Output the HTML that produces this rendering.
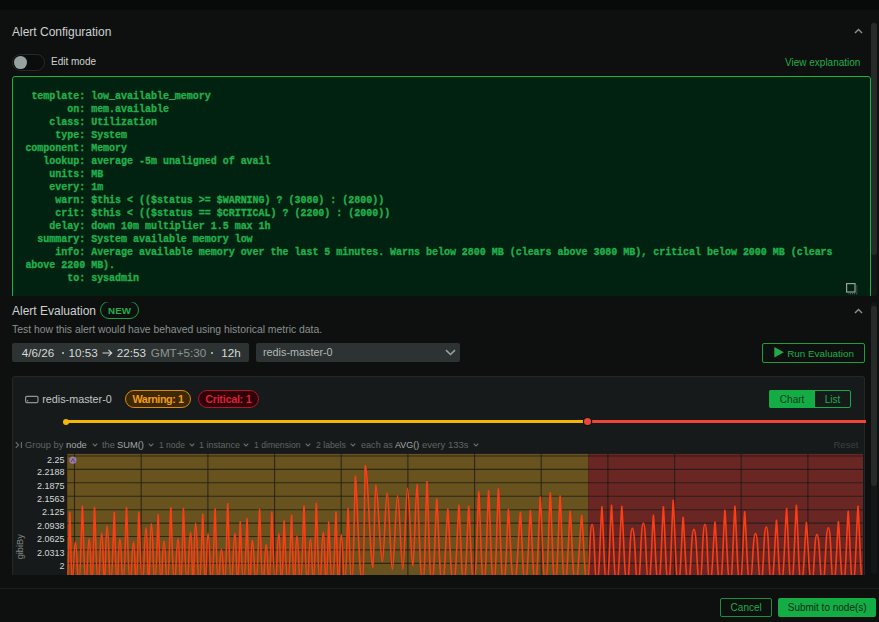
<!DOCTYPE html>
<html><head><meta charset="utf-8">
<style>
*{box-sizing:border-box;margin:0;padding:0}
html,body{width:879px;height:622px;overflow:hidden;background:#0e1010;font-family:"Liberation Sans",sans-serif;color:#d6d9d8}
.abs{position:absolute}
#top{left:0;top:0;width:879px;height:10px;background:#080a0a}
.h{font-size:12px;color:#cdd1d0;white-space:nowrap}
.chev{width:8px;height:5px}
#code{left:12px;top:75.5px;width:859px;height:240px;background:#012211;border:1px solid #1eb246;border-radius:3px}
pre{position:absolute;left:12.4px;top:13px;font-family:"Liberation Mono",monospace;font-weight:bold;font-size:10px;line-height:13px;color:#21b04b;white-space:pre-wrap;width:830px;letter-spacing:-0.022px;-webkit-text-stroke:0.3px #21b04b}
#clip1{left:0;top:0;width:879px;height:296px;overflow:hidden}
#band{display:none}
.dt{top:44px;font-size:11.7px;line-height:13px;color:#d6dad9;white-space:pre}
.sb{background:#262b2a;border-radius:3px;width:6px}
</style></head><body>
<div class="abs" id="top"></div>
<div class="abs" id="clip1">
  <div class="abs h" style="left:12px;top:26px;line-height:12px">Alert Configuration</div>
  <svg class="abs" style="left:854px;top:28px" width="9" height="6" viewBox="0 0 9 6"><path d="M1 5 L4.5 1.5 L8 5" fill="none" stroke="#8d9391" stroke-width="1.4"/></svg>
  <div class="abs" style="left:12px;top:54px;width:33px;height:16.5px;border-radius:8.25px;background:#0b0d0d;border:1px solid #242a2a"></div>
  <div class="abs" style="left:14.2px;top:55.8px;width:12.8px;height:12.8px;border-radius:50%;background:#96a2a0"></div>
  <div class="abs" style="left:51px;top:56px;font-size:10px;line-height:12px;color:#cfd3d2">Edit mode</div>
  <div class="abs" style="left:785px;top:57px;font-size:10px;line-height:12px;color:#1eae48">View explanation</div>
<div class="abs" id="code" style="top:75.5px">
<pre> template: low_available_memory
       on: mem.available
    class: Utilization
     type: System
component: Memory
   lookup: average -5m unaligned of avail
    units: MB
    every: 1m
     warn: $this &lt; (($status &gt;= $WARNING) ? (3080) : (2800))
     crit: $this &lt; (($status == $CRITICAL) ? (2200) : (2000))
    delay: down 10m multiplier 1.5 max 1h
  summary: System available memory low
     info: Average available memory over the last 5 minutes. Warns below 2800 MB (clears above 3080 MB), critical below 2000 MB (clears above 2200 MB).
       to: sysadmin</pre>
</div>
  <div class="sb abs" style="left:870.6px;top:22px;height:274px;background:#141717"></div>
  <div class="sb abs" style="left:870.6px;top:23.3px;height:232px"></div>
  <svg class="abs" style="left:845px;top:282px" width="14" height="13" viewBox="0 0 14 13"><rect x="1.6" y="1.6" width="8.4" height="8.4" fill="none" stroke="#9aa09e" stroke-width="1.2"/><path d="M11.8 3.5 V11.8 H3.5" fill="none" stroke="#6f7573" stroke-width="1" stroke-dasharray="1 1"/></svg>
</div>
<div class="abs" id="band"></div>

<div class="abs" id="clip2" style="left:0;top:302px;width:879px;height:273px;overflow:hidden">
  <div class="abs h" style="left:12px;top:3.3px;line-height:12px">Alert Evaluation</div>
  <div class="abs" style="left:100px;top:-1px;width:39px;height:18.4px;border:1px solid #1c9e3e;border-radius:9px;color:#1eae48;font-weight:bold;font-size:9.8px;line-height:17.5px;text-align:center">NEW</div>
  <svg class="abs" style="left:854px;top:6px" width="9" height="6" viewBox="0 0 9 6"><path d="M1 5 L4.5 1.5 L8 5" fill="none" stroke="#8d9391" stroke-width="1.4"/></svg>
  <div class="abs" style="left:12px;top:21.5px;font-size:10.4px;line-height:12px;color:#8a908e;white-space:nowrap">Test how this alert would have behaved using historical metric data.</div>
  <div class="abs" style="left:12px;top:41.2px;width:237px;height:19.2px;background:#2d3332;border-radius:2px"></div>
  <div class="abs dt" style="left:21.8px">4/6/26</div>
  <div class="abs" style="left:61.5px;top:50px;width:2.2px;height:2.2px;border-radius:50%;background:#c9cdcc"></div>
  <div class="abs dt" style="left:68.5px">10:53</div>
  <svg class="abs" style="left:102px;top:47px" width="11" height="8" viewBox="0 0 11 8"><path d="M0.5 4 H9.6 M6.4 0.9 L9.7 4 L6.4 7.1" fill="none" stroke="#d0d4d3" stroke-width="1.1"/></svg>
  <div class="abs dt" style="left:116.7px">22:53</div>
  <div class="abs dt" style="left:150.8px;color:#8d9391">GMT+5:30</div>
  <div class="abs" style="left:210.9px;top:50px;width:2.2px;height:2.2px;border-radius:50%;background:#c9cdcc"></div>
  <div class="abs dt" style="left:221.2px">12h</div>
  <div class="abs" style="left:256px;top:41px;width:204px;height:19px;background:#2d3332;border-radius:2px"></div>
  <div class="abs" style="left:263px;top:44.2px;font-size:10.8px;line-height:13px;color:#b3b8b6;white-space:pre">redis-master-0</div>
  <svg class="abs" style="left:445px;top:47px" width="11" height="7" viewBox="0 0 11 7"><path d="M1 1.2 L5.5 5.5 L10 1.2" fill="none" stroke="#9aa09e" stroke-width="1.6"/></svg>
  <div class="abs" style="left:762px;top:41px;width:103px;height:19.5px;border:1px solid #1c9e3e;border-radius:2px"></div>
  <svg class="abs" style="left:773.5px;top:45.1px" width="10" height="11" viewBox="0 0 10 11"><path d="M0.3 0 L9.8 5.25 L0.3 10.5 Z" fill="#1eae48"/></svg>
  <div class="abs" style="left:787.2px;top:45.6px;font-size:9.85px;line-height:12px;color:#1eae48;white-space:pre">Run Evaluation</div>
  <div class="sb abs" style="left:870.5px;top:0;height:272px;background:#141717"></div>
  <div class="sb abs" style="left:870.5px;top:3.5px;height:180px"></div>
  <div class="abs" id="card" style="left:12px;top:74px;width:853px;height:260px;background:#171a1a;border:1px solid #232827;border-radius:3px"></div>
  <div class="abs" style="left:0;top:-302px;width:879px;height:622px">

<div class="abs" style="left:12px;top:376px;width:853px;height:260px;background:#171a1a;border:1px solid #232827;border-radius:3px"></div>
<svg class="abs" style="left:24px;top:395px" width="16" height="9" viewBox="0 0 16 9"><rect x="1.6" y="1.4" width="12.4" height="6.2" rx="1.3" fill="none" stroke="#8e9594" stroke-width="1.2"/><rect x="3" y="5.2" width="1.2" height="1.2" fill="#8e9594"/></svg>
<div class="abs" style="left:42.2px;top:393.2px;font-size:10.8px;line-height:13px;color:#c2c6c5;white-space:pre">redis-master-0</div>
<div class="abs" style="left:125px;top:390px;width:66px;height:18px;border:1px solid #d68a10;background:#3d2800;border-radius:9px;color:#f09a18;font-weight:bold;font-size:10.8px;letter-spacing:-0.44px;line-height:16.5px;text-align:center;white-space:pre">Warning: 1</div>
<div class="abs" style="left:197.6px;top:390px;width:61.4px;height:18px;border:1px solid #b0162a;background:#2e0208;border-radius:9px;color:#dc2035;font-weight:bold;font-size:10.8px;letter-spacing:-0.27px;line-height:16.5px;text-align:center;white-space:pre">Critical: 1</div>
<div class="abs" style="left:769px;top:390px;width:82px;height:18.4px;border:1px solid #13ac45;border-radius:2px"></div>
<div class="abs" style="left:769px;top:390px;width:46.2px;height:18.4px;background:#13ac45;border-radius:2px 0 0 2px"></div><div class="abs" style="left:769px;top:390.8px;width:46.2px;color:#0f3a1d;font-size:10px;line-height:18.4px;text-align:center">Chart</div>
<div class="abs" style="left:814.7px;top:390.8px;width:35.8px;height:18.4px;color:#1eae48;font-size:10px;line-height:18.4px;text-align:center">List</div>
<div class="abs" style="left:66px;top:420.1px;width:518px;height:3px;background:#f5b800"></div>
<div class="abs" style="left:591.5px;top:420.1px;width:274.2px;height:3px;background:#f04438"></div>
<div class="abs" style="left:63.3px;top:418.8px;width:6px;height:6px;border-radius:50%;background:#f5b800"></div>
<div class="abs" style="left:583.9px;top:417.9px;width:7.4px;height:7.4px;border-radius:50%;background:#f04438;box-shadow:0 0 0 1.2px #111414"></div>
<svg class="abs" style="left:15px;top:441px" width="8" height="8" viewBox="0 0 8 8"><path d="M0.8 1.2 L3.6 4 L0.8 6.8" fill="none" stroke="#6a706e" stroke-width="1.1"/><line x1="6.4" y1="1" x2="6.4" y2="7" stroke="#6a706e" stroke-width="1.1"/></svg>
<div class="abs" style="left:24.7px;top:438.8px;font-size:9.3px;line-height:12px;color:#5f6664;white-space:pre;transform:scaleX(1.007);transform-origin:0 0">Group by</div>
<div class="abs" style="left:65.7px;top:438.8px;font-size:9.3px;line-height:12px;color:#a2a8a6;white-space:pre;transform:scaleX(1.005);transform-origin:0 0">node</div>
<div class="abs" style="left:102px;top:438.8px;font-size:9.3px;line-height:12px;color:#5f6664;white-space:pre;transform:scaleX(1.005);transform-origin:0 0">the</div>
<div class="abs" style="left:117px;top:438.8px;font-size:9.3px;line-height:12px;color:#a2a8a6;white-space:pre;transform:scaleX(1.005);transform-origin:0 0">SUM()</div>
<div class="abs" style="left:159px;top:438.8px;font-size:9.3px;line-height:12px;color:#5f6664;white-space:pre;transform:scaleX(0.914);transform-origin:0 0">1 node</div>
<div class="abs" style="left:199px;top:438.8px;font-size:9.3px;line-height:12px;color:#5f6664;white-space:pre;transform:scaleX(0.967);transform-origin:0 0">1 instance</div>
<div class="abs" style="left:253.5px;top:438.8px;font-size:9.3px;line-height:12px;color:#5f6664;white-space:pre;transform:scaleX(0.927);transform-origin:0 0">1 dimension</div>
<div class="abs" style="left:315.5px;top:438.8px;font-size:9.3px;line-height:12px;color:#5f6664;white-space:pre;transform:scaleX(0.930);transform-origin:0 0">2 labels</div>
<div class="abs" style="left:361px;top:438.8px;font-size:9.3px;line-height:12px;color:#5f6664;white-space:pre;transform:scaleX(0.977);transform-origin:0 0">each as</div>
<div class="abs" style="left:395.1px;top:438.8px;font-size:9.3px;line-height:12px;color:#a2a8a6;white-space:pre;transform:scaleX(0.959);transform-origin:0 0">AVG()</div>
<div class="abs" style="left:422px;top:438.8px;font-size:9.3px;line-height:12px;color:#5f6664;white-space:pre;transform:scaleX(1.025);transform-origin:0 0">every 133s</div>
<svg class="abs" style="left:91.6px;top:442.5px" width="6" height="4" viewBox="0 0 6 4"><path d="M0.7 0.7 L3 3 L5.3 0.7" fill="none" stroke="#6a706e" stroke-width="1.1"/></svg>
<svg class="abs" style="left:148px;top:442.5px" width="6" height="4" viewBox="0 0 6 4"><path d="M0.7 0.7 L3 3 L5.3 0.7" fill="none" stroke="#6a706e" stroke-width="1.1"/></svg>
<svg class="abs" style="left:189px;top:442.5px" width="6" height="4" viewBox="0 0 6 4"><path d="M0.7 0.7 L3 3 L5.3 0.7" fill="none" stroke="#6a706e" stroke-width="1.1"/></svg>
<svg class="abs" style="left:243px;top:442.5px" width="6" height="4" viewBox="0 0 6 4"><path d="M0.7 0.7 L3 3 L5.3 0.7" fill="none" stroke="#6a706e" stroke-width="1.1"/></svg>
<svg class="abs" style="left:305px;top:442.5px" width="6" height="4" viewBox="0 0 6 4"><path d="M0.7 0.7 L3 3 L5.3 0.7" fill="none" stroke="#6a706e" stroke-width="1.1"/></svg>
<svg class="abs" style="left:350.3px;top:442.5px" width="6" height="4" viewBox="0 0 6 4"><path d="M0.7 0.7 L3 3 L5.3 0.7" fill="none" stroke="#6a706e" stroke-width="1.1"/></svg>
<svg class="abs" style="left:473.2px;top:442.5px" width="6" height="4" viewBox="0 0 6 4"><path d="M0.7 0.7 L3 3 L5.3 0.7" fill="none" stroke="#6a706e" stroke-width="1.1"/></svg>
<div class="abs" style="left:833.5px;top:439px;font-size:9.5px;line-height:12px;color:#3b403f">Reset</div>
<svg class="abs" style="left:0;top:0" width="879" height="622" viewBox="0 0 879 622">
<rect x="67.2" y="453.9" width="521.0" height="130" fill="#68521e"/>
<rect x="588.2" y="453.9" width="274.79999999999995" height="130" fill="#692623"/>
<g stroke="rgba(22,25,25,0.72)" stroke-width="1.1"><line x1="67.2" y1="456.0" x2="863" y2="456.0"/><line x1="67.2" y1="469.4" x2="863" y2="469.4"/><line x1="67.2" y1="482.8" x2="863" y2="482.8"/><line x1="67.2" y1="496.3" x2="863" y2="496.3"/><line x1="67.2" y1="509.7" x2="863" y2="509.7"/><line x1="67.2" y1="523.1" x2="863" y2="523.1"/><line x1="67.2" y1="536.5" x2="863" y2="536.5"/><line x1="67.2" y1="549.9" x2="863" y2="549.9"/><line x1="67.2" y1="563.4" x2="863" y2="563.4"/><line x1="67.2" y1="576.8" x2="863" y2="576.8"/><line x1="74.5" y1="453.9" x2="74.5" y2="590"/><line x1="141.2" y1="453.9" x2="141.2" y2="590"/><line x1="207.9" y1="453.9" x2="207.9" y2="590"/><line x1="274.6" y1="453.9" x2="274.6" y2="590"/><line x1="341.2" y1="453.9" x2="341.2" y2="590"/><line x1="407.9" y1="453.9" x2="407.9" y2="590"/><line x1="474.6" y1="453.9" x2="474.6" y2="590"/><line x1="541.2" y1="453.9" x2="541.2" y2="590"/><line x1="607.9" y1="453.9" x2="607.9" y2="590"/><line x1="674.6" y1="453.9" x2="674.6" y2="590"/><line x1="741.2" y1="453.9" x2="741.2" y2="590"/><line x1="807.9" y1="453.9" x2="807.9" y2="590"/></g>
<path d="M67.0 584.0 C68.40 584.0 68.96 526.6 69.8 512.3 C70.62 526.6 71.17 584.0 72.5 584.0 C73.92 584.0 73.79 542.0 75.3 542.0 C77.25 542.0 77.07 584.0 78.8 584.0 C80.62 584.0 81.34 521.9 82.4 506.4 C83.44 521.9 84.12 584.0 85.8 584.0 C87.57 584.0 87.40 538.8 89.3 538.8 C90.73 538.8 90.60 584.0 91.9 584.0 C93.20 584.0 93.72 522.8 94.5 507.5 C95.59 522.8 96.33 584.0 98.2 584.0 C99.97 584.0 99.79 533.0 101.8 533.0 C103.23 533.0 103.10 584.0 104.4 584.0 C105.70 584.0 105.57 525.7 107.0 525.7 C109.01 525.7 108.83 584.0 110.7 584.0 C112.47 584.0 113.20 526.6 114.3 512.3 C115.12 526.6 115.67 584.0 117.0 584.0 C118.42 584.0 118.29 538.8 119.8 538.8 C121.64 538.8 121.47 584.0 123.2 584.0 C124.83 584.0 125.50 522.8 126.5 507.5 C127.56 522.8 128.28 584.0 130.1 584.0 C131.82 584.0 131.65 542.0 133.6 542.0 C135.03 542.0 134.90 584.0 136.2 584.0 C137.50 584.0 138.02 526.6 138.8 512.3 C139.90 526.6 140.62 584.0 142.4 584.0 C144.27 584.0 144.09 527.7 146.1 527.7 C147.53 527.7 147.40 584.0 148.7 584.0 C150.00 584.0 149.87 523.6 151.3 523.6 C153.20 523.6 153.03 584.0 154.8 584.0 C156.47 584.0 157.16 528.6 158.2 514.8 C159.06 528.6 159.62 584.0 161.1 584.0 C162.48 584.0 162.33 541.0 163.9 541.0 C165.80 541.0 165.62 584.0 167.4 584.0 C169.08 584.0 169.77 522.8 170.8 507.5 C171.90 522.8 172.62 584.0 174.4 584.0 C176.27 584.0 176.09 538.8 178.1 538.8 C179.56 538.8 179.43 584.0 180.8 584.0 C182.07 584.0 182.61 523.6 183.4 508.5 C184.50 523.6 185.23 584.0 187.1 584.0 C188.88 584.0 188.69 532.1 190.7 532.1 C192.02 532.1 191.90 584.0 193.1 584.0 C194.30 584.0 194.18 523.1 195.5 523.1 C197.51 523.1 197.32 584.0 199.2 584.0 C200.98 584.0 201.71 528.3 202.8 514.4 C203.58 528.3 204.10 584.0 205.4 584.0 C206.70 584.0 206.57 533.6 208.0 533.6 C209.95 533.6 209.78 584.0 211.6 584.0 C213.32 584.0 214.03 524.1 215.1 509.1 C216.04 524.1 216.68 584.0 218.2 584.0 C219.82 584.0 219.67 549.3 221.4 549.3 C223.13 549.3 222.98 584.0 224.6 584.0 C226.12 584.0 226.75 519.9 227.7 503.9 C228.79 519.9 229.52 584.0 231.3 584.0 C233.18 584.0 232.99 533.2 235.0 533.2 C236.43 533.2 236.30 584.0 237.6 584.0 C238.90 584.0 239.42 534.2 240.2 521.7 C241.23 534.2 241.92 584.0 243.6 584.0 C245.38 584.0 246.06 531.6 247.1 518.5 C247.88 531.6 248.40 584.0 249.7 584.0 C251.00 584.0 250.87 540.3 252.3 540.3 C254.31 540.3 254.12 584.0 256.0 584.0 C257.78 584.0 258.50 524.5 259.6 509.6 C260.61 524.5 261.28 584.0 263.0 584.0 C264.62 584.0 264.46 544.5 266.3 544.5 C267.81 544.5 267.68 584.0 269.1 584.0 C270.43 584.0 270.98 526.5 271.8 512.1 C272.87 526.5 273.58 584.0 275.4 584.0 C277.12 584.0 276.95 533.6 278.9 533.6 C280.33 533.6 280.20 584.0 281.5 584.0 C282.80 584.0 283.32 533.7 284.1 521.1 C285.23 533.7 285.98 584.0 287.9 584.0 C289.73 584.0 290.48 529.0 291.6 515.2 C292.40 529.0 292.93 584.0 294.2 584.0 C295.57 584.0 295.44 536.1 296.9 536.1 C298.85 536.1 298.67 584.0 300.4 584.0 C302.23 584.0 302.94 521.6 304.0 506.0 C304.98 521.6 305.62 584.0 307.2 584.0 C308.88 584.0 308.71 538.8 310.5 538.8 C312.09 538.8 311.95 584.0 313.4 584.0 C314.85 584.0 315.43 519.4 316.3 503.3 C317.37 519.4 318.08 584.0 319.9 584.0 C321.62 584.0 321.45 532.1 323.4 532.1 C324.86 532.1 324.72 584.0 326.0 584.0 C327.38 584.0 327.90 534.5 328.7 522.1 C329.80 534.5 330.52 584.0 332.4 584.0 C334.18 584.0 334.91 526.5 336.0 512.1 C336.78 526.5 337.30 584.0 338.6 584.0 C339.90 584.0 339.77 534.6 341.2 534.6 C343.10 534.6 342.92 584.0 344.6 584.0 C346.38 584.0 347.06 523.6 348.1 508.5 C349.19 523.6 349.93 584.0 351.8 584.0 C353.57 584.0 354.31 497.7 355.4 476.1 C357.59 497.7 359.05 584.0 362.7 584.0 C363.95 584.0 364.45 489.4 365.2 465.7 C367.93 465.7 370.27 567.5 373.0 567.5 C373.94 567.5 374.75 484.5 375.7 484.5 C378.04 484.5 380.06 561.8 382.4 561.8 C384.08 561.8 385.52 492.8 387.2 492.8 C389.02 492.8 390.58 569.5 392.4 569.5 C394.22 569.5 395.78 495.6 397.6 495.6 C399.45 495.6 401.05 569.1 402.9 569.1 C404.51 569.1 405.89 488.2 407.5 488.2 C409.39 488.2 411.01 566.0 412.9 566.0 C414.37 566.0 415.63 484.5 417.1 484.5 C418.81 504.4 419.95 584.0 422.8 584.0 C424.90 584.0 425.74 502.2 427.0 481.8 C428.44 502.2 429.40 584.0 431.8 584.0 C434.30 584.0 435.30 516.1 436.8 499.1 C438.42 516.1 439.50 584.0 442.2 584.0 C445.00 584.0 446.12 524.1 447.8 509.1 C449.51 524.1 450.65 584.0 453.5 584.0 C456.20 584.0 457.28 521.1 458.9 505.4 C460.40 521.1 461.40 584.0 463.9 584.0 C466.30 584.0 467.26 521.9 468.7 506.4 C470.29 521.9 471.35 584.0 474.0 584.0 C476.40 584.0 477.36 510.2 478.8 491.8 C480.30 510.2 481.30 584.0 483.8 584.0 C486.20 584.0 487.16 509.4 488.6 490.8 C490.16 509.4 491.20 584.0 493.8 584.0 C496.10 584.0 497.02 507.8 498.4 488.7 C499.96 507.8 501.00 584.0 503.6 584.0 C506.00 584.0 506.96 524.5 508.4 509.6 C510.11 524.5 511.25 584.0 514.1 584.0 C517.25 584.0 518.51 526.6 520.4 512.3 C521.84 526.6 522.80 584.0 525.2 584.0 C527.80 584.0 528.84 525.3 530.4 510.6 C531.87 525.3 532.85 584.0 535.3 584.0 C537.80 584.0 538.80 514.4 540.3 497.0 C541.86 514.4 542.90 584.0 545.5 584.0 C547.90 584.0 548.86 511.0 550.3 492.8 C551.74 511.0 552.70 584.0 555.1 584.0 C557.60 584.0 558.60 513.6 560.1 496.0 C561.54 513.6 562.50 584.0 564.9 584.0 C567.55 584.0 568.61 525.8 570.2 511.2 C571.76 525.8 572.80 584.0 575.4 584.0 C578.55 584.0 579.81 529.1 581.7 515.4 C583.38 529.1 584.50 584.0 587.3 584.0 C589.70 584.0 589.46 524.2 592.1 524.2 C594.74 524.2 594.50 584.0 596.9 584.0 C599.40 584.0 600.40 522.2 601.9 506.8 C603.34 522.2 604.30 584.0 606.7 584.0 C609.10 584.0 610.06 521.1 611.5 505.4 C613.03 521.1 614.05 584.0 616.6 584.0 C619.20 584.0 620.24 521.9 621.8 506.4 C623.36 521.9 624.40 584.0 627.0 584.0 C629.70 584.0 629.43 528.4 632.4 528.4 C635.48 528.4 635.20 584.0 638.0 584.0 C640.70 584.0 640.43 523.1 643.4 523.1 C646.26 523.1 646.00 584.0 648.6 584.0 C651.00 584.0 651.96 529.1 653.4 515.4 C654.90 529.1 655.90 584.0 658.4 584.0 C660.90 584.0 661.90 522.2 663.4 506.8 C664.90 522.2 665.90 584.0 668.4 584.0 C670.80 584.0 671.76 517.0 673.2 500.2 C674.73 517.0 675.75 584.0 678.3 584.0 C680.70 584.0 681.66 530.6 683.1 517.3 C684.66 530.6 685.70 584.0 688.3 584.0 C691.10 584.0 690.82 529.4 693.9 529.4 C697.14 529.4 696.85 584.0 699.8 584.0 C702.40 584.0 702.14 524.2 705.0 524.2 C707.64 524.2 707.40 584.0 709.8 584.0 C712.40 584.0 713.44 534.5 715.0 522.1 C716.53 534.5 717.55 584.0 720.1 584.0 C722.50 584.0 723.46 525.0 724.9 510.2 C726.46 525.0 727.50 584.0 730.1 584.0 C732.50 584.0 733.46 521.9 734.9 506.4 C736.40 521.9 737.40 584.0 739.9 584.0 C742.30 584.0 743.26 526.2 744.7 511.7 C746.26 526.2 747.30 584.0 749.9 584.0 C752.70 584.0 752.42 533.6 755.5 533.6 C758.47 533.6 758.20 584.0 760.9 584.0 C763.60 584.0 763.33 526.9 766.3 526.9 C769.05 526.9 768.80 584.0 771.3 584.0 C773.90 584.0 774.94 533.1 776.5 520.4 C777.94 533.1 778.90 584.0 781.3 584.0 C783.95 584.0 785.01 523.6 786.6 508.5 C788.04 523.6 789.00 584.0 791.4 584.0 C793.90 584.0 794.90 521.1 796.4 505.4 C797.84 521.1 798.80 584.0 801.2 584.0 C803.80 584.0 804.84 534.8 806.4 522.5 C807.99 534.8 809.05 584.0 811.7 584.0 C814.30 584.0 814.04 534.6 816.9 534.6 C820.09 534.6 819.80 584.0 822.7 584.0 C825.55 584.0 825.26 527.7 828.4 527.7 C831.26 527.7 831.00 584.0 833.6 584.0 C836.00 584.0 836.96 534.2 838.4 521.7 C839.90 534.2 840.90 584.0 843.4 584.0 C845.80 584.0 846.76 525.8 848.2 511.2 C849.64 525.8 850.60 584.0 853.0 584.0 C855.50 584.0 856.50 521.9 858.0 506.4 C859.47 521.9 860.45 584.0 862.9 584.0" fill="none" stroke="#ff3d14" stroke-width="1.6" stroke-linejoin="round"/>
<circle cx="72.9" cy="460.2" r="3.6" fill="rgba(165,135,205,0.8)"/><path d="M71.2 462 L72.9 458.6 L74.6 462" fill="none" stroke="#5a4a50" stroke-width="0.9"/>
</svg>
<div class="abs" style="right:814.5px;top:454.4px;font-size:9px;line-height:12px;color:#d4d8d7;white-space:nowrap">2.25</div><div class="abs" style="right:814.5px;top:466.1px;font-size:9px;line-height:12px;color:#d4d8d7;white-space:nowrap">2.2188</div><div class="abs" style="right:814.5px;top:479.5px;font-size:9px;line-height:12px;color:#d4d8d7;white-space:nowrap">2.1875</div><div class="abs" style="right:814.5px;top:493.0px;font-size:9px;line-height:12px;color:#d4d8d7;white-space:nowrap">2.1563</div><div class="abs" style="right:814.5px;top:506.4px;font-size:9px;line-height:12px;color:#d4d8d7;white-space:nowrap">2.125</div><div class="abs" style="right:814.5px;top:519.8px;font-size:9px;line-height:12px;color:#d4d8d7;white-space:nowrap">2.0938</div><div class="abs" style="right:814.5px;top:533.2px;font-size:9px;line-height:12px;color:#d4d8d7;white-space:nowrap">2.0625</div><div class="abs" style="right:814.5px;top:546.6px;font-size:9px;line-height:12px;color:#d4d8d7;white-space:nowrap">2.0313</div><div class="abs" style="right:814.5px;top:560.1px;font-size:9px;line-height:12px;color:#d4d8d7;white-space:nowrap">2</div>
<svg class="abs" style="left:0;top:0" width="60" height="622"><text transform="translate(22.6 559.3) rotate(-90)" font-family="Liberation Sans" font-size="9.2" fill="#7f8583">gibiBy</text></svg>

  </div>
</div>
<div class="abs" style="left:0;top:588px;width:879px;height:1px;background:#1a1e1d"></div>
<div class="abs" style="left:720.2px;top:597.9px;width:52px;height:19.5px;border:1px solid #17923c;border-radius:2px;color:#1eae48;font-size:10px;line-height:17.2px;text-align:center">Cancel</div>
<div class="abs" style="left:778.2px;top:597.9px;width:98px;height:19.5px;background:#13ac45;border-radius:2px;color:#0c2d17;font-size:10px;line-height:19px;text-align:center">Submit to node(s)</div>
</body></html>
